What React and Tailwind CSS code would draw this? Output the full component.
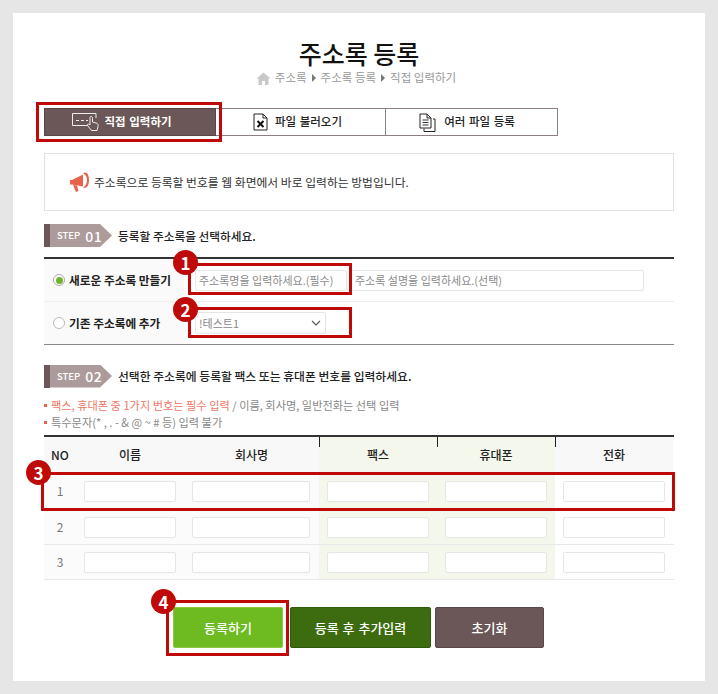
import React from "react";

const FONT = '"Noto Sans CJK KR", "Noto Sans", sans-serif';

function Home() {
  return (
    <svg width="15" height="13" viewBox="0 0 14 13" className="mr-[4px]">
      <path d="M7 0.5 L14 6.5 H12 V13 H8.5 V9 H5.5 V13 H2 V6.5 H0 Z" fill="#c9c9c9" />
    </svg>
  );
}
function Tri() {
  return <span className="mx-[5px] inline-block h-0 w-0 border-y-[4px] border-l-[4px] border-y-transparent border-l-[#777]" />;
}
function KeyboardIcon() {
  return (
    <svg width="27" height="18" viewBox="0 0 27 18" fill="none">
      <path d="M17 12.5 H0.5 V0.5 H24 V5" stroke="#eee" strokeWidth="1" />
      <path d="M4 7.5 H7 M9 7.5 H12 M14 7.5 H16" stroke="#eee" strokeWidth="1" />
      <path d="M19 3.5 C20.3 3.5 20.5 4.5 20.5 5.5 V9 L24 10 C26 10.5 26.5 11.5 26 13.5 L25 17.5 H19.5 L15.5 12.5 C15 11 16.5 10.5 18 12 V5 C18 4 18.3 3.5 19 3.5 Z" fill="#6b5757" stroke="#eee" strokeWidth="1" />
    </svg>
  );
}
function XFileIcon() {
  return (
    <svg width="15" height="18" viewBox="0 0 15 18" fill="none">
      <path d="M1 1 H10 L14 5 V17 H1 Z" stroke="#222" strokeWidth="1" fill="#fff" />
      <path d="M10 1 V5 H14" stroke="#222" strokeWidth="1" />
      <path d="M4.5 8 L10.5 14 M10.5 8 L4.5 14" stroke="#111" strokeWidth="2" />
    </svg>
  );
}
function DocsIcon() {
  return (
    <svg width="17" height="19" viewBox="0 0 17 19" fill="none">
      <path d="M1 1 H8 L12 5 V15 H1 Z" stroke="#222" fill="#fff" />
      <path d="M8 1 V5 H12" stroke="#222" />
      <path d="M3.5 7 H9.5 M3.5 9.5 H9.5 M3.5 12 H9.5" stroke="#333" />
      <path d="M14 6 H16 V18.5 H5 V15.5" stroke="#222" />
    </svg>
  );
}
function Megaphone() {
  return (
    <svg width="21" height="22" viewBox="0 0 21 22">
      <path d="M1 9 L3 9 L14 3.5 V15.5 L3 13.5 H1 Z" fill="#e8614a" />
      <path d="M14 2 C18 0 20 4 20 9 C20 14 18 18 14 16.5 C17 15 18 12 18 9 C18 6 17 4 14 2 Z" fill="#e8614a" />
      <path d="M4 14 L8 14.5 L9.5 20 L7 21 Z" fill="#e8614a" />
    </svg>
  );
}
function Step({ n }) {
  return (
    <div className="flex h-[23px] w-[68px] shrink-0">
      <div className="w-[6px] bg-[#6b5757]" />
      <div className="flex flex-1 items-center bg-[#ad9a9a] pl-[7px] text-white [clip-path:polygon(0_0,50px_0,62px_50%,50px_100%,0_100%)]">
        <span className="text-[9.5px]">STEP</span>
        <span className="ml-[5px] text-[14px] leading-none tracking-[0.5px]">{n}</span>
      </div>
    </div>
  );
}
function Badge({ n, className }) {
  return (
    <span className={`absolute flex h-[25px] w-[25px] items-center justify-center rounded-full bg-[#c00a0a] text-[17px] font-bold leading-none text-white ${className}`}>
      {n}
    </span>
  );
}
function Field({ className = "", placeholder = "" }) {
  return (
    <input
      placeholder={placeholder}
      className={`h-[21px] rounded-[2px] border border-[#e6e6e6] bg-white px-[3px] text-[11px] text-[#666] outline-none placeholder:text-[#8a8a8a] ${className}`}
    />
  );
}
function Row({ n, h, line }) {
  const cell = "flex items-center justify-center px-2";
  return (
    <div className={`grid grid-cols-[32px_108px_135px_118px_118px_118px] ${h} ${line ? "border-b border-[#e8e8e8]" : ""}`}>
      <div className="flex items-center justify-center bg-[#fbfbfb] text-[12px] text-[#777]">{n}</div>
      <div className={`${cell} bg-[#fbfbfb]`}><Field className="w-full" /></div>
      <div className={`${cell} justify-start bg-[#fbfbfb]`}><Field className="w-[118px]" /></div>
      <div className={`${cell} bg-[#f3f7ec]`}><Field className="w-full" /></div>
      <div className={`${cell} bg-[#f3f7ec]`}><Field className="w-full" /></div>
      <div className={`${cell} bg-white`}><Field className="w-full" /></div>
    </div>
  );
}

export default function App() {
  return (
    <div className="h-[694px] w-[718px] bg-[#e6e6e6] p-[13px]" style={{ fontFamily: FONT }}>
      <div className="relative h-[668px] w-[692px] bg-white px-[31px] pt-[24px]">
        <h1 className="text-center text-[25px] font-medium leading-[32px] text-[#111]">주소록 등록</h1>
        <div className="flex h-[18px] items-center justify-center pr-[6px] text-[11.5px] text-[#999]">
          <Home />
          <span>주소록</span><Tri /><span>주소록 등록</span><Tri /><span>직접 입력하기</span>
        </div>

        <div className="mt-[21px] flex h-[28px] w-[514px] text-[11.5px] [word-spacing:1px]">
          <div className="flex w-[172px] items-center justify-center gap-[5px] border border-[#584646] bg-[#6b5757] pr-[16px] font-bold text-white">
            <KeyboardIcon /><span>직접 입력하기</span>
          </div>
          <div className="flex w-[170px] items-center justify-center gap-[7px] border-y border-r border-[#8d7f7f] pr-[6px] font-medium text-[#222]">
            <XFileIcon /><span>파일 불러오기</span>
          </div>
          <div className="flex flex-1 items-center justify-center gap-[8px] border-y border-r border-[#8d7f7f] pr-[9px] font-medium text-[#222]">
            <DocsIcon /><span>여러 파일 등록</span>
          </div>
        </div>

        <div className="mt-[17px] flex h-[58px] items-center gap-[4px] border border-[#e2e2e2] pl-[24px] text-[11.8px] text-[#333]">
          <Megaphone /><span>주소록으로 등록할 번호를 웹 화면에서 바로 입력하는 방법입니다.</span>
        </div>

        <div className="mt-[13px] flex h-[23px] items-center gap-[6px] text-[11.7px] font-medium text-[#222]">
          <Step n="01" /><span>등록할 주소록을 선택하세요.</span>
        </div>

        <div className="mt-[10px] border-t-2 border-b border-t-[#333] border-b-[#888]">
          <div className="grid h-[43px] grid-cols-[140px_1fr] border-b border-[#eee]">
            <div className="flex items-center bg-[#fafafa] pl-[9px] text-[11.7px] font-bold text-[#222]">
              <span className="mr-[4px] flex h-[12px] w-[12px] items-center justify-center rounded-full border border-[#aaa] bg-white">
                <span className="h-[7px] w-[7px] rounded-full bg-[#72b52a]" />
              </span>
              새로운 주소록 만들기
            </div>
            <div className="flex items-center gap-[4px] pl-[11px]">
              <Field className="w-[152px]" placeholder="주소록명을 입력하세요.(필수)" />
              <Field className="w-[293px]" placeholder="주소록 설명을 입력하세요.(선택)" />
            </div>
          </div>
          <div className="grid h-[42px] grid-cols-[140px_1fr]">
            <div className="flex items-center bg-[#fafafa] pl-[9px] text-[11.7px] font-bold text-[#222]">
              <span className="mr-[4px] h-[12px] w-[12px] rounded-full border border-[#bbb] bg-white" />
              기존 주소록에 추가
            </div>
            <div className="flex items-center pl-[11px]">
              <div className="flex h-[22px] w-[131px] items-center justify-between rounded-[2px] border border-[#e6e6e6] px-[3px] text-[11px] text-[#888]">
                <span>!테스트1</span>
                <svg width="10" height="6" viewBox="0 0 10 6" fill="none" className="mr-[1px]">
                  <path d="M1 1 L5 5 L9 1" stroke="#555" strokeWidth="1.2" />
                </svg>
              </div>
            </div>
          </div>
        </div>

        <div className="mt-[19px] flex h-[24px] items-center gap-[6px] text-[11.8px] font-medium text-[#222]">
          <Step n="02" /><span>선택한 주소록에 등록할 팩스 또는 휴대폰 번호를 입력하세요.</span>
        </div>

        <div className="mt-[9px] text-[11.2px] leading-[17px] text-[#888]">
          <div className="flex items-center">
            <span className="mr-[4px] h-[3px] w-[3px] bg-[#e8614a]" />
            <span className="text-[#ee7766]">팩스, 휴대폰 중 1가지 번호는 필수 입력</span>
            <span className="whitespace-pre"> / 이름, 회사명, 일반전화는 선택 입력</span>
          </div>
          <div className="flex items-center">
            <span className="mr-[4px] h-[3px] w-[3px] bg-[#e8614a]" />
            <span>특수문자(* , . - &amp; @ ~ # 등) 입력 불가</span>
          </div>
        </div>

        <div className="mt-[4px] border-t-2 border-[#333]">
          <div className="grid h-[35px] grid-cols-[32px_108px_135px_118px_118px_118px] text-[12px] font-medium text-[#222]">
            <div className="flex items-center justify-center bg-[#f8f8f8]">NO</div>
            <div className="flex items-center justify-center bg-[#f8f8f8]">이름</div>
            <div className="flex items-center justify-center bg-[#f8f8f8]">회사명</div>
            <div className="relative flex items-center justify-center bg-[#f3f7ec]">
              <span className="absolute left-0 top-0 h-[10px] w-px bg-[#222]" />팩스
            </div>
            <div className="relative flex items-center justify-center bg-[#f3f7ec]">
              <span className="absolute left-0 top-0 h-[10px] w-px bg-[#222]" />휴대폰
            </div>
            <div className="relative flex items-center justify-center bg-[#f8f8f8]">
              <span className="absolute left-0 top-0 h-[10px] w-px bg-[#222]" />전화
            </div>
          </div>
          <Row n="1" h="h-[38px]" />
          <Row n="2" h="h-[35px]" line />
          <Row n="3" h="h-[35px]" line />
        </div>

        <div className="ml-[129px] mt-[27px] flex h-[41px] text-[13px] font-medium text-white [word-spacing:1px]">
          <div className="flex w-[110px] items-center justify-center rounded-[2px] border border-[#8ec63f] bg-[#6dbb21]">등록하기</div>
          <div className="ml-[7px] flex w-[141px] items-center justify-center rounded-[2px] border border-[#2f5a0c] bg-[#3d6c10]">등록 후 추가입력</div>
          <div className="ml-[4px] flex w-[109px] items-center justify-center rounded-[2px] border border-[#5a4747] bg-[#6b5757]">초기화</div>
        </div>

        {/* highlight annotations */}
        <div className="absolute left-[23px] top-[89px] h-[40px] w-[186px] border-[3px] border-[#c00a0a]" />
        <div className="absolute left-[175px] top-[250px] h-[32px] w-[164px] border-[3px] border-[#c00a0a]" />
        <div className="absolute left-[175px] top-[294px] h-[31px] w-[164px] border-[3px] border-[#c00a0a]" />
        <div className="absolute left-[28px] top-[459px] h-[39px] w-[634px] border-[3px] border-[#c00a0a]" />
        <div className="absolute left-[153px] top-[587px] h-[56px] w-[123px] border-[3px] border-[#c00a0a]" />
        <Badge n="1" className="left-[160px] top-[237px]" />
        <Badge n="2" className="left-[160px] top-[284px]" />
        <Badge n="3" className="left-[13px] top-[447px]" />
        <Badge n="4" className="left-[138px] top-[576px]" />
      </div>
    </div>
  );
}
